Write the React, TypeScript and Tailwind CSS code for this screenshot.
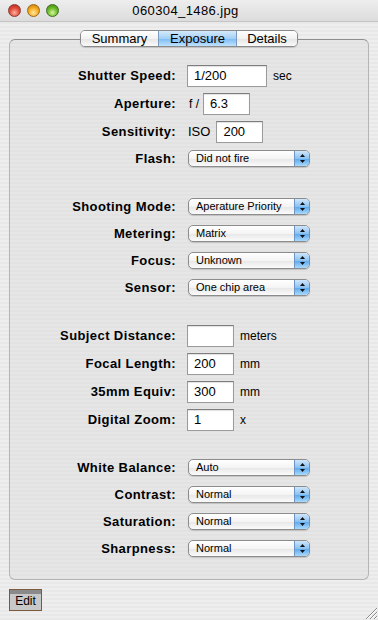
import React from "react";

const FONT = "font-['Liberation_Sans',Arial,sans-serif]";

function Popup({ value }: { value: string }) {
  return (
    <div className="flex h-[17px] w-[122px] items-stretch rounded-[5px] border border-[#8c8c8c] bg-[linear-gradient(to_bottom,#ffffff,#f4f4f4_50%,#e6e6e6_51%,#fbfbfb)] shadow-[0_1px_1px_rgba(0,0,0,0.15)] overflow-hidden">
      <span className="flex-1 pl-[7px] text-[11px] leading-[15px] text-black">{value}</span>
      <span className="flex w-[15px] items-center justify-center border-l border-[#6c94c4] bg-[linear-gradient(to_bottom,#cfe6fb,#8cc2f2_50%,#5aa6ec_51%,#a8dafd)]">
        <svg width="7" height="11" viewBox="0 0 7 11">
          <path d="M3.5 1 L6 4 L1 4 Z" fill="#111" />
          <path d="M3.5 10 L6 7 L1 7 Z" fill="#111" />
        </svg>
      </span>
    </div>
  );
}

function Field({ value, w = "w-[47px]" }: { value: string; w?: string }) {
  return (
    <div className={`${w} h-[22px] border border-[#9b9b9b] border-t-[#7d7d7d] bg-white pl-[6px] text-[13px] leading-[20px] text-black shadow-[inset_0_1px_1px_rgba(0,0,0,0.12)]`}>
      {value}
    </div>
  );
}

function Row({ label, h, children }: { label: string; h: string; children: React.ReactNode }) {
  return (
    <div className={`flex items-center ${h}`}>
      <span className="w-[167px] pr-[1px] text-right text-[13px] font-bold tracking-[0.4px] text-black">{label}</span>
      <div className="ml-[10px] flex items-center">{children}</div>
    </div>
  );
}

const unit = "text-[12px] text-black";

export default function App() {
  const modes = [
    ["Shooting Mode:", "Aperature Priority"],
    ["Metering:", "Matrix"],
    ["Focus:", "Unknown"],
    ["Sensor:", "One chip area"],
  ];
  const lens = [
    ["Subject Distance:", "", "meters"],
    ["Focal Length:", "200", "mm"],
    ["35mm Equiv:", "300", "mm"],
    ["Digital Zoom:", "1", "x"],
  ];
  const image = [
    ["White Balance:", "Auto"],
    ["Contrast:", "Normal"],
    ["Saturation:", "Normal"],
    ["Sharpness:", "Normal"],
  ];

  return (
    <div className={`${FONT} relative h-[620px] w-[378px] overflow-hidden bg-[repeating-linear-gradient(to_bottom,#eeeeee_0px,#eeeeee_2px,#e8e8e8_2px,#e8e8e8_4px)]`}>
      {/* title bar */}
      <div className="relative flex h-[22px] items-center border-b border-[#c4c4c4] bg-[linear-gradient(to_bottom,#eeeeee,#dcdcdc)]">
        <div className="flex gap-[6px] pl-[8px]">
          <span className="h-[13px] w-[13px] rounded-full border border-[#8c3a32] bg-[radial-gradient(circle_at_50%_70%,#ffb0a0,#e24a3a_50%,#a82418)]" />
          <span className="h-[13px] w-[13px] rounded-full border border-[#9a6a1a] bg-[radial-gradient(circle_at_50%_70%,#ffe9a0,#f6ac22_50%,#c07008)]" />
          <span className="h-[13px] w-[13px] rounded-full border border-[#3e6e1e] bg-[radial-gradient(circle_at_50%_70%,#d6f6a0,#6cba2a_50%,#3a8212)]" />
        </div>
        <span className="flex-1 pr-[66px] text-center text-[13px] tracking-[0.4px] text-black">060304_1486.jpg</span>
      </div>

      <div className="px-[9px] pt-[8px]">
        {/* tabs */}
        <div className="relative z-10 flex justify-center">
          <div className="flex h-[17px] overflow-hidden rounded-[5px] border border-[#8a8a8a] text-[13px] leading-[15px] text-black shadow-[0_1px_1px_rgba(0,0,0,0.15)]">
            <span className="w-[77px] bg-[linear-gradient(to_bottom,#ffffff,#f2f2f2_50%,#e4e4e4_51%,#fafafa)] text-center">Summary</span>
            <span className="w-[79px] border-x border-[#7b9ac0] bg-[linear-gradient(to_bottom,#d4e9fb,#a3d0f6_50%,#7cbaf2_51%,#bfe3ff)] text-center">Exposure</span>
            <span className="w-[60px] bg-[linear-gradient(to_bottom,#ffffff,#f2f2f2_50%,#e4e4e4_51%,#fafafa)] text-center">Details</span>
          </div>
        </div>

        {/* tab content */}
        <div className="-mt-[8px] h-[541px] rounded-[6px] border border-[#b4b4b4] border-t-[#8e8e8e] bg-[repeating-linear-gradient(to_bottom,#e6e6e6_0px,#e6e6e6_2px,#e2e2e2_2px,#e2e2e2_4px)] pt-[22px]">
          <div>
            <Row label="Shutter Speed:" h="h-[28px]">
              <Field value="1/200" w="w-[80px]" />
              <span className={`${unit} ml-[6px]`}>sec</span>
            </Row>
            <Row label="Aperture:" h="h-[28px]">
              <span className={`${unit} ml-[2px] mr-[4px]`}>f /</span>
              <Field value="6.3" />
            </Row>
            <Row label="Sensitivity:" h="h-[28px]">
              <span className={`${unit} ml-[1px] mr-[6px] text-[13px]`}>ISO</span>
              <Field value="200" />
            </Row>
            <Row label="Flash:" h="h-[25px]">
              <div className="ml-[1px]"><Popup value="Did not fire" /></div>
            </Row>
          </div>

          <div className="mt-[22px]">
            {modes.map(([l, v]) => (
              <Row key={l} label={l} h="h-[27px]">
                <div className="ml-[1px]"><Popup value={v} /></div>
              </Row>
            ))}
          </div>

          <div className="mt-[21px]">
            {lens.map(([l, v, u]) => (
              <Row key={l} label={l} h="h-[28px]">
                <Field value={v} />
                <span className={`${unit} ml-[6px]`}>{u}</span>
              </Row>
            ))}
          </div>

          <div className="mt-[20px]">
            {image.map(([l, v]) => (
              <Row key={l} label={l} h="h-[27px]">
                <div className="ml-[1px]"><Popup value={v} /></div>
              </Row>
            ))}
          </div>
        </div>

        {/* edit button */}
        <div className="mt-[9px] flex h-[22px] w-[33px] flex-col border border-[#7a5a3a] bg-[#c8c8c8] text-[12px] text-black">
          <span className="h-[4px] bg-[#8a8a8a]" />
          <span className="flex-1 text-center leading-[14px]">Edit</span>
        </div>
      </div>

      {/* resize grip */}
      <svg className="absolute bottom-0 right-0" width="15" height="15" viewBox="0 0 15 15">
        <path d="M14 3 L3 14 M14 7 L7 14 M14 11 L11 14" stroke="#8a8a8a" strokeWidth="1" />
        <path d="M14 4 L4 14 M14 8 L8 14 M14 12 L12 14" stroke="#ffffff" strokeWidth="1" />
      </svg>
    </div>
  );
}
